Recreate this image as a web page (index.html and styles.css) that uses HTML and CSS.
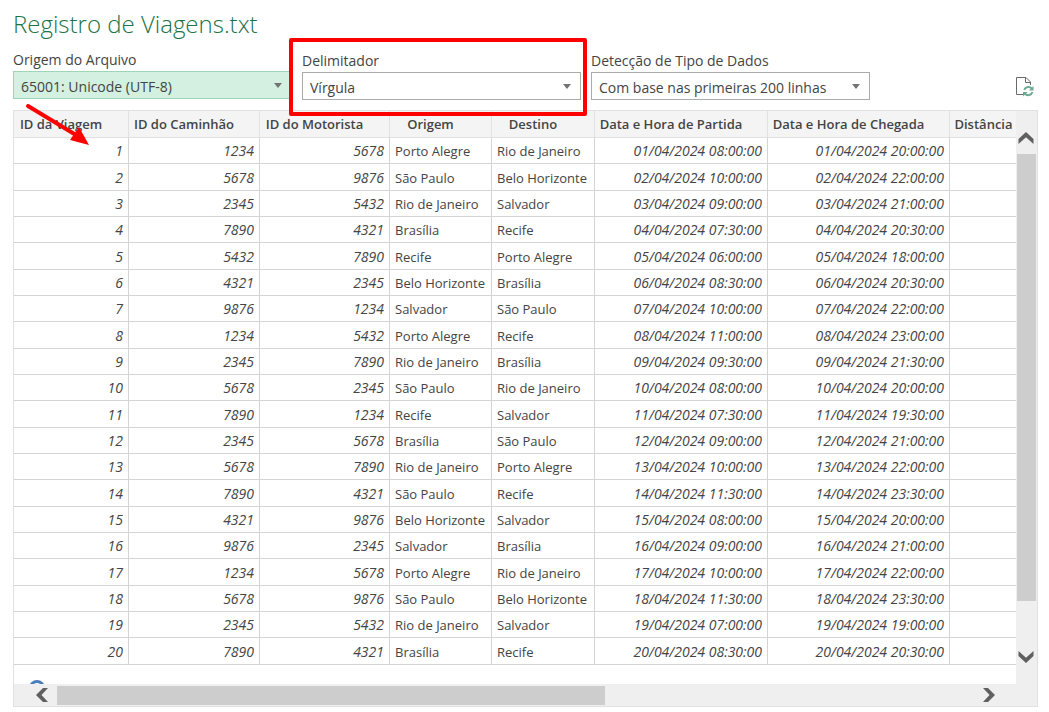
FILE: index.html
```html
<!DOCTYPE html>
<html lang="pt-BR">
<head>
<meta charset="utf-8">
<title>Registro de Viagens.txt</title>
<link rel="stylesheet" href="styles.css">
</head>
<body>
<main class="page">
  <h1 class="title">Registro de Viagens.txt</h1>
  <form class="options">
    <div class="field field-origin">
      <label for="origin">Origem do Arquivo</label>
      <div class="combo combo-active">
        <select id="origin"><option>65001: Unicode (UTF-8)</option></select>
      </div>
    </div>
    <div class="field field-marked">
      <label for="delimiter">Delimitador</label>
      <div class="combo">
        <select id="delimiter"><option>Vírgula</option></select>
      </div>
    </div>
    <div class="field">
      <label for="detection">Detecção de Tipo de Dados</label>
      <div class="combo">
        <select id="detection"><option>Com base nas primeiras 200 linhas</option></select>
      </div>
    </div>
    <button class="refresh" type="button" aria-label="Atualizar">
      <svg width="18" height="20" viewBox="0 0 18 20" fill="none">
        <path d="M7 17.500H.5V.5H10L14.500 5v3M9.500.5V5.500h5" stroke="#6a6a6a"/>
        <path d="M8.200 13a4.500 4.500 0 0 1 7.600-1.500M16.500 15a4.500 4.500 0 0 1-7.600 1.700" stroke="#6aab91" stroke-width="2"/>
        <path d="M17.500 9v4.500h-4.500zM7 19.500V15h4.500z" fill="#6aab91"/>
      </svg>
    </button>
  </form>

  <section class="preview">
    <div class="viewport">
      <table class="data">
        <colgroup>
          <col class="c-trip"><col class="c-truck"><col class="c-driver"><col class="c-from"><col class="c-to"><col class="c-depart"><col class="c-arrive"><col class="c-distance">
        </colgroup>
        <thead>
          <tr><th>ID da Viagem</th><th>ID do Caminhão</th><th>ID do Motorista</th><th>Origem</th><th>Destino</th><th>Data e Hora de Partida</th><th>Data e Hora de Chegada</th><th>Distância</th></tr>
        </thead>
        <tbody>
          <tr><td class="n">1</td><td class="n">1234</td><td class="n">5678</td><td>Porto Alegre</td><td>Rio de Janeiro</td><td class="n">01/04/2024 08:00:00</td><td class="n">01/04/2024 20:00:00</td><td></td></tr>
          <tr><td class="n">2</td><td class="n">5678</td><td class="n">9876</td><td>São Paulo</td><td>Belo Horizonte</td><td class="n">02/04/2024 10:00:00</td><td class="n">02/04/2024 22:00:00</td><td></td></tr>
          <tr><td class="n">3</td><td class="n">2345</td><td class="n">5432</td><td>Rio de Janeiro</td><td>Salvador</td><td class="n">03/04/2024 09:00:00</td><td class="n">03/04/2024 21:00:00</td><td></td></tr>
          <tr><td class="n">4</td><td class="n">7890</td><td class="n">4321</td><td>Brasília</td><td>Recife</td><td class="n">04/04/2024 07:30:00</td><td class="n">04/04/2024 20:30:00</td><td></td></tr>
          <tr><td class="n">5</td><td class="n">5432</td><td class="n">7890</td><td>Recife</td><td>Porto Alegre</td><td class="n">05/04/2024 06:00:00</td><td class="n">05/04/2024 18:00:00</td><td></td></tr>
          <tr><td class="n">6</td><td class="n">4321</td><td class="n">2345</td><td>Belo Horizonte</td><td>Brasília</td><td class="n">06/04/2024 08:30:00</td><td class="n">06/04/2024 20:30:00</td><td></td></tr>
          <tr><td class="n">7</td><td class="n">9876</td><td class="n">1234</td><td>Salvador</td><td>São Paulo</td><td class="n">07/04/2024 10:00:00</td><td class="n">07/04/2024 22:00:00</td><td></td></tr>
          <tr><td class="n">8</td><td class="n">1234</td><td class="n">5432</td><td>Porto Alegre</td><td>Recife</td><td class="n">08/04/2024 11:00:00</td><td class="n">08/04/2024 23:00:00</td><td></td></tr>
          <tr><td class="n">9</td><td class="n">2345</td><td class="n">7890</td><td>Rio de Janeiro</td><td>Brasília</td><td class="n">09/04/2024 09:30:00</td><td class="n">09/04/2024 21:30:00</td><td></td></tr>
          <tr><td class="n">10</td><td class="n">5678</td><td class="n">2345</td><td>São Paulo</td><td>Rio de Janeiro</td><td class="n">10/04/2024 08:00:00</td><td class="n">10/04/2024 20:00:00</td><td></td></tr>
          <tr><td class="n">11</td><td class="n">7890</td><td class="n">1234</td><td>Recife</td><td>Salvador</td><td class="n">11/04/2024 07:30:00</td><td class="n">11/04/2024 19:30:00</td><td></td></tr>
          <tr><td class="n">12</td><td class="n">2345</td><td class="n">5678</td><td>Brasília</td><td>São Paulo</td><td class="n">12/04/2024 09:00:00</td><td class="n">12/04/2024 21:00:00</td><td></td></tr>
          <tr><td class="n">13</td><td class="n">5678</td><td class="n">7890</td><td>Rio de Janeiro</td><td>Porto Alegre</td><td class="n">13/04/2024 10:00:00</td><td class="n">13/04/2024 22:00:00</td><td></td></tr>
          <tr><td class="n">14</td><td class="n">7890</td><td class="n">4321</td><td>São Paulo</td><td>Recife</td><td class="n">14/04/2024 11:30:00</td><td class="n">14/04/2024 23:30:00</td><td></td></tr>
          <tr><td class="n">15</td><td class="n">4321</td><td class="n">9876</td><td>Belo Horizonte</td><td>Salvador</td><td class="n">15/04/2024 08:00:00</td><td class="n">15/04/2024 20:00:00</td><td></td></tr>
          <tr><td class="n">16</td><td class="n">9876</td><td class="n">2345</td><td>Salvador</td><td>Brasília</td><td class="n">16/04/2024 09:00:00</td><td class="n">16/04/2024 21:00:00</td><td></td></tr>
          <tr><td class="n">17</td><td class="n">1234</td><td class="n">5678</td><td>Porto Alegre</td><td>Rio de Janeiro</td><td class="n">17/04/2024 10:00:00</td><td class="n">17/04/2024 22:00:00</td><td></td></tr>
          <tr><td class="n">18</td><td class="n">5678</td><td class="n">9876</td><td>São Paulo</td><td>Belo Horizonte</td><td class="n">18/04/2024 11:30:00</td><td class="n">18/04/2024 23:30:00</td><td></td></tr>
          <tr><td class="n">19</td><td class="n">2345</td><td class="n">5432</td><td>Rio de Janeiro</td><td>Salvador</td><td class="n">19/04/2024 07:00:00</td><td class="n">19/04/2024 19:00:00</td><td></td></tr>
          <tr><td class="n">20</td><td class="n">7890</td><td class="n">4321</td><td>Brasília</td><td>Recife</td><td class="n">20/04/2024 08:30:00</td><td class="n">20/04/2024 20:30:00</td><td></td></tr>
        </tbody>
      </table>
      <div class="note"><span class="info"></span></div>
    </div>
    <div class="vbar">
      <button type="button" aria-label="Rolar para cima"><svg width="16" height="12" viewBox="0 0 16 12"><path d="M8 0l7.500 7v5L8 5.200.5 12V7z" fill="#606060"/></svg></button>
      <div class="vtrack"><div class="vthumb"></div></div>
      <button type="button" aria-label="Rolar para baixo"><svg width="16" height="12" viewBox="0 0 16 12"><path d="M8 12l7.500-7V0L8 6.800.5 0v5z" fill="#606060"/></svg></button>
    </div>
    <div class="hbar">
      <button type="button" aria-label="Rolar para a esquerda"><svg width="12" height="14" viewBox="0 0 12 14"><path d="M0 7l7-7h5L5.500 7l6.500 7H7z" fill="#606060"/></svg></button>
      <div class="htrack"><div class="hthumb"></div></div>
      <button type="button" aria-label="Rolar para a direita"><svg width="12" height="14" viewBox="0 0 12 14"><path d="M12 7L5 0H0l6.500 7L0 14h5z" fill="#606060"/></svg></button>
    </div>
    <svg class="arrow" width="66" height="44" viewBox="0 0 66 44"><path d="M4 4L52 33" stroke="#f00" stroke-width="4" stroke-linecap="round"/><path d="M65 43L46 38L55 25z" fill="#f00"/></svg>
  </section>
</main>
</body>
</html>
```
FILE: styles.css
```css
* { box-sizing: border-box; }

body {
  margin: 0;
  background: #fff;
  color: #444;
  font-family: "Open Sans", "Noto Sans", sans-serif;
}

.page { padding: 8px 11px 4px 13px; }

.title {
  margin: 0;
  color: #217346;
  font-size: 24px;
  font-weight: 300;
  line-height: 32px;
}

.options {
  display: grid;
  grid-template-columns: 279px 279px 279px 1fr;
  gap: 10px;
  height: 70px;
  padding-top: 10px;
}

.field { position: relative; padding-top: 1px; }
.field-origin { padding-top: 0; }

.field label {
  display: block;
  padding-bottom: 1px;
  font-size: 14px;
  line-height: 20px;
}

.field-marked::after {
  content: "";
  position: absolute;
  z-index: 2;
  inset: -12px -6px -6px -13px;
  border: 4px solid #f00;
  border-radius: 2px;
  pointer-events: none;
}

.combo { position: relative; }

.combo::after {
  content: "";
  position: absolute;
  top: 12px;
  right: 10px;
  border: 4px solid transparent;
  border-top: 5px solid #737373;
  border-bottom: 0;
  pointer-events: none;
}

.combo select {
  display: block;
  appearance: none;
  width: 100%;
  height: 28px;
  padding: 2px 24px 0 7px;
  border: 1px solid #ababab;
  border-radius: 0;
  background: #fff;
  color: #444;
  font: inherit;
  font-size: 14px;
}

.combo-active select { background: #d3f0e0; border-color: #9fd5b7; }

.refresh {
  justify-self: end;
  align-self: start;
  margin-top: 27px;
  margin-right: 4px;
  padding: 0;
  border: 0;
  background: none;
}

.refresh svg { display: block; }

.preview {
  position: relative;
  display: grid;
  grid-template-columns: minmax(0, 1fr) 21px;
  border: 1px solid #e1e1e1;
  background: #efefef;
}

.viewport { overflow: hidden; background: #fff; }

.data {
  width: 1024px;
  table-layout: fixed;
  border-collapse: separate;
  border-spacing: 0;
  font-size: 13px;
  line-height: 18px;
}

.c-trip { width: 115px; }
.c-truck { width: 131px; }
.c-driver { width: 130px; }
.c-from { width: 102px; }
.c-to { width: 103px; }
.c-depart { width: 173px; }
.c-arrive { width: 182px; }
.c-distance { width: 88px; }

.data th,
.data td {
  overflow: hidden;
  border-right: 1px solid #d4d4d4;
  border-bottom: 1px solid #d4d4d4;
  white-space: nowrap;
}

.data th {
  height: 27px;
  padding: 0 20px 0 0;
  overflow: visible;
  border-color: #e1e1e1;
  background: #f4f4f4;
  font-weight: 600;
  text-align: center;
}

.data td { height: 26px; padding: 1px 2px 0 5px; text-align: left; }
.data tbody tr:nth-child(3n + 2) td { height: 27px; }
.data .n { padding-right: 5px; font-size: 14px; font-style: italic; text-align: right; }

.note { height: 19px; padding: 15px 0 0 15px; overflow: hidden; }

.info {
  display: block;
  width: 16px;
  height: 16px;
  border: 3px solid #4a7ebb;
  border-radius: 50%;
}

.vbar button,
.hbar button {
  display: block;
  padding: 0;
  border: 0;
  background: none;
}

.vbar svg,
.hbar svg { display: block; }

.vbar {
  display: flex;
  flex-direction: column;
  align-items: center;
  padding: 21px 1px 21px 0;
}

.vtrack { flex: 1; width: 19px; padding-top: 10px; }
.vthumb { height: 90%; background: #cdcdcd; }

.hbar {
  grid-column: 1 / -1;
  display: flex;
  align-items: center;
  height: 22px;
  padding: 0 42px 0 22px;
}

.htrack { flex: 1; padding: 0 12px 0 9px; }
.hthumb { width: 60%; height: 19px; background: #cdcdcd; }

.arrow {
  position: absolute;
  z-index: 1;
  top: -9px;
  left: 10px;
}
```
